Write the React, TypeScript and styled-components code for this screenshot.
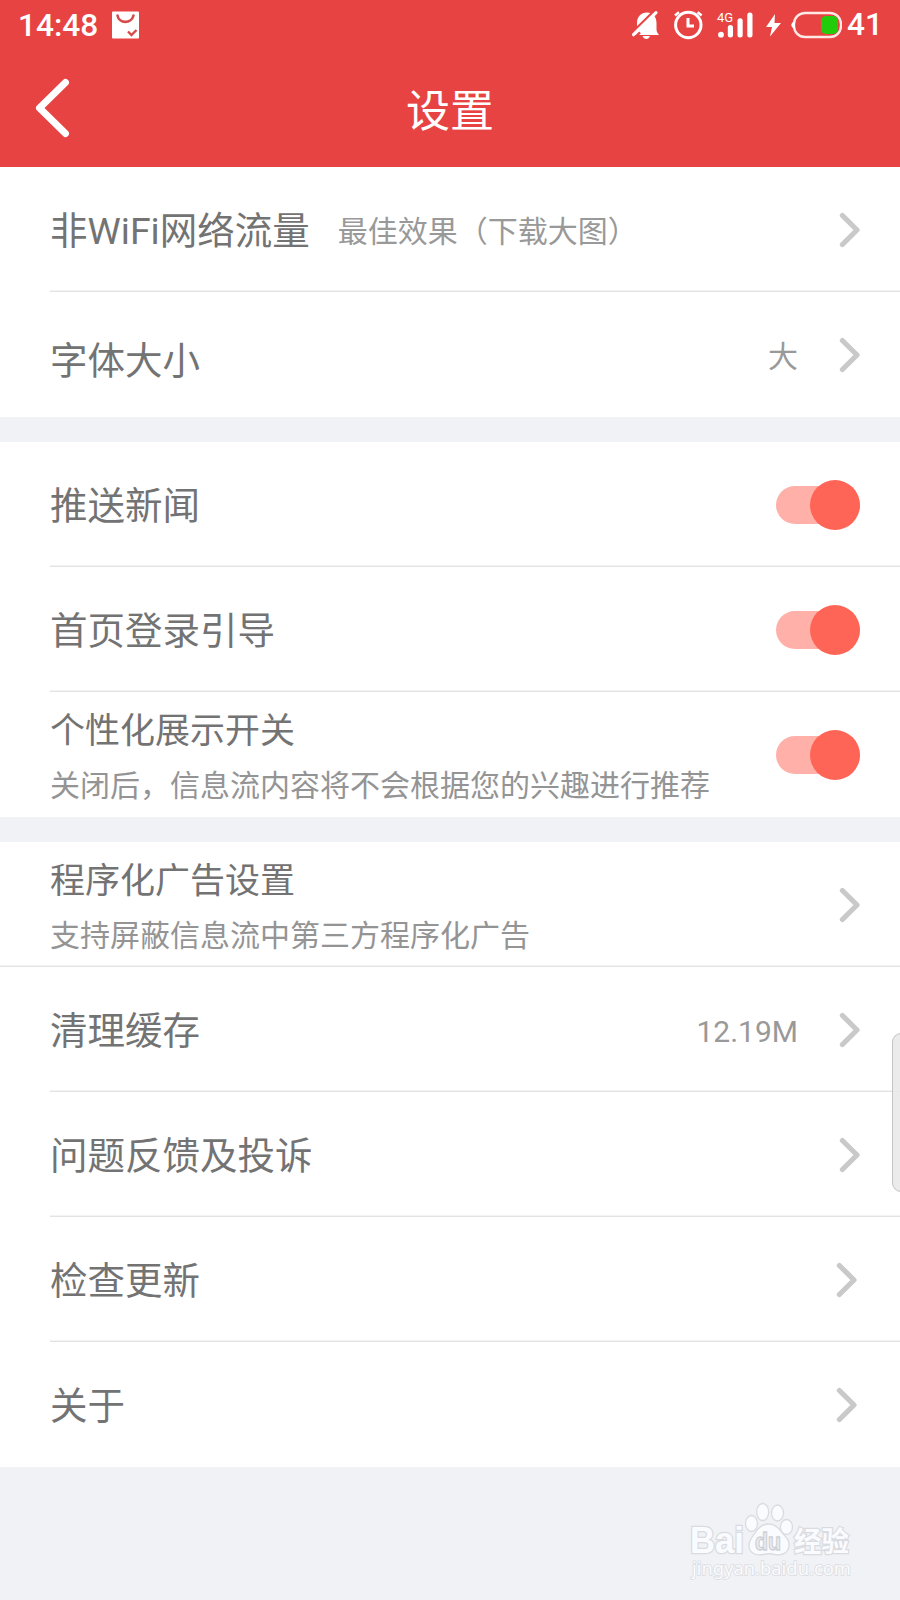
import React from 'react';
import styled, { createGlobalStyle } from 'styled-components';

const GlobalStyle = createGlobalStyle`
  * { box-sizing: border-box; }
  body {
    margin: 0;
    background: #f0f2f6;
    font-family: Roboto, "Noto Sans CJK SC", sans-serif;
  }
`;

const Screen = styled.main`
  position: relative;
  display: flex;
  flex-direction: column;
  width: 900px;
  height: 1600px;
  overflow: hidden;
  background: #f0f2f6;
`;

const Header = styled.header`
  display: flex;
  flex-direction: column;
  height: 167px;
  background: #e74342;
  color: #fff;
`;

const StatusBar = styled.div`
  display: flex;
  justify-content: space-between;
  height: 50px;
  padding: 0 20px 0 18px;
  font-size: 31.6px;
  font-weight: 500;
  line-height: 50px;
`;

const StatusGroup = styled.div`
  display: flex;
  align-items: center;
`;

const Clock = styled.span`
  width: 93px;
  padding-top: 2px;
`;

const NavBar = styled.div`
  display: grid;
  grid-template-columns: 120px 1fr 120px;
  align-items: center;
  height: 117px;
`;

const BackButton = styled.button`
  display: flex;
  padding: 0 0 1px 30px;
  border: 0;
  background: none;
  color: inherit;
`;

const PageTitle = styled.h1`
  margin: 0;
  padding-top: 7px;
  text-align: center;
  font-size: 44px;
  font-weight: 400;
  line-height: 60px;
`;

const Section = styled.section`
  margin-bottom: 25px;
  background: #fff;
`;

const Row = styled.div<{ $divider?: 'inset' | 'full' }>`
  display: flex;
  align-items: center;
  height: 125px;
  padding: 0 40px 0 50px;
  background: linear-gradient(#f3f3f4 50%, #e3e3e4 50%) no-repeat
    ${p => (p.$divider === 'full' ? '0' : '50px')} 100% / ${p => (p.$divider ? '100%' : '0')} 2px;
`;

const Labels = styled.div<{ $shift?: number }>`
  display: flex;
  flex: 1;
  flex-direction: column;
  gap: 6px;
  padding-top: ${p => p.$shift ?? 2}px;
`;

const Label = styled.span<{ $small?: boolean }>`
  color: #737373;
  font-size: ${p => (p.$small ? 35 : 37.5)}px;
  line-height: 48px;
  white-space: nowrap;
`;

const Hint = styled.span`
  margin-left: 28px;
  color: #999;
  font-size: 30px;
  position: relative;
  top: -2px;
`;

const Description = styled.span`
  color: #949494;
  font-size: 30px;
  line-height: 48px;
  white-space: nowrap;
`;

const Value = styled.span`
  margin-right: 41px;
  padding-top: 4px;
  color: #999;
  font-size: 30px;
  line-height: 48px;
`;

const Arrow = styled.svg<{ $inset?: boolean }>`
  width: 22px;
  height: 36px;
  margin-right: ${p => (p.$inset ? 2 : -1)}px;
  fill: none;
  stroke: #c9c9c9;
  stroke-width: 5.2;
  stroke-linecap: round;
  stroke-linejoin: round;
`;

const Switch = styled.button`
  display: flex;
  align-items: center;
  justify-content: flex-end;
  width: 84px;
  height: 38px;
  padding: 0;
  border: 0;
  border-radius: 19px;
  background: #ffb0a9;
`;

const Knob = styled.span`
  width: 50px;
  height: 50px;
  flex: none;
  border-radius: 50%;
  background: #ff6557;
`;

const EdgeHandle = styled.div`
  position: absolute;
  top: 1033px;
  right: -10px;
  width: 18px;
  height: 159px;
  border: 1px solid #c4c4c4;
  border-radius: 9px;
  background: rgba(232, 232, 232, 0.85);
`;

const Watermark = styled.svg`
  position: absolute;
  left: 680px;
  top: 1495px;
`;

const Chevron = ({ inset }: { inset?: boolean }) => (
  <Arrow $inset={inset} viewBox="0 0 22 36">
    <path d="M3.4 3.5 18 18 3.4 32.5" />
  </Arrow>
);

const Toggle = () => (
  <Switch role="switch" aria-checked="true">
    <Knob />
  </Switch>
);

const BagIcon = () => (
  <svg width="28" height="28" viewBox="0 0 28 28">
    <rect x="1" y="0.5" width="27" height="27" rx="1" fill="#fff" />
    <path d="M6.5 4.500c1.500 8.500 14 8.500 16 0" fill="none" stroke="#d84a4a" strokeWidth="2.6" strokeLinecap="round" />
    <path d="m17 20.500 3.500 3.500 5-5" fill="none" stroke="#d84a4a" strokeWidth="2.4" />
  </svg>
);

const StatusIcons = () => (
  <svg width="212" height="50" viewBox="630 0 212 50" fill="#fff">
    <path d="M634 35c2.500-1.500 3-3.500 3-6.500V23c0-6 4-10.500 10-10.500S656.500 17 656.500 23v5.500c0 3 .5 4 2.500 6.500z" />
    <path d="M642.500 36h7.500c-.8 2-2 3-3.700 3s-3-1-3.800-3z" />
    <path d="m630 34.700 25-24.500M635 37.300l5-5" stroke="#e74342" strokeWidth="2.400" />
    <path d="m633.500 34.700 22.500-22" stroke="#fff" strokeWidth="3.200" strokeLinecap="round" />
    <g fill="none" stroke="#fff">
      <circle cx="688.3" cy="25" r="12.7" strokeWidth="3" />
      <path d="M688 18v8h6" strokeWidth="3" />
      <path d="m675 15.500 4-3.300M701.600 15.500l-4-3.300" strokeWidth="2.6" />
    </g>
    <text x="717" y="22" fontFamily="Roboto, sans-serif" fontSize="13" fontWeight="400">4G</text>
    <circle cx="721" cy="34.7" r="2.9" />
    <rect x="727.8" y="25" width="5.2" height="12.5" rx="2.5" />
    <rect x="737.5" y="18.3" width="5.2" height="19.2" rx="2.5" />
    <rect x="747.3" y="12.5" width="5.2" height="25" rx="2.5" />
    <path d="m775 14-9 13h6l-2 9.500L781 23h-6.500z" />
    <rect x="794" y="13" width="47" height="24" rx="11" fill="none" stroke="#ffe9e7" strokeWidth="2.4" />
    <path d="M795 21c-5 2-5 6 0 8z" />
    <rect x="821" y="16" width="17" height="18" rx="5" fill="#22cc0b" />
  </svg>
);

const BatteryLevel = styled.span`
  width: 33px;
  margin-left: 5px;
`;

const BaiduMark = () => (
  <Watermark width="190" height="95" viewBox="680 1495 190 95" fill="#fafbfe" stroke="#d9dbdf" strokeWidth="1.3">
    <g paintOrder="stroke" strokeWidth="2.5" fontFamily="'Liberation Sans', sans-serif" fontWeight="700">
      <text x="690" y="1553" fontSize="36" textLength="54" lengthAdjust="spacingAndGlyphs">Bai</text>
      <text x="794" y="1551.5" fontSize="28" fontFamily="'Noto Sans CJK SC', sans-serif" textLength="55" lengthAdjust="spacingAndGlyphs">经验</text>
    </g>
    <ellipse cx="751.5" cy="1523.5" rx="6" ry="8" />
    <ellipse cx="762.7" cy="1512" rx="6" ry="8.5" />
    <ellipse cx="777.5" cy="1513" rx="6" ry="8" />
    <ellipse cx="786.5" cy="1527" rx="6" ry="7.5" />
    <path d="M757 1530c6-8 17-8 23 0 4 6 10 9 9 16-1 7-7 10-14 8.500-4-1-8-1-12 0-8 1.500-14-2-14-9 0-7 5-10 8-15.500z" />
    <text x="755" y="1550" fontSize="23" fill="#eceef2" stroke="#cfd1d6" fontFamily="'Liberation Sans', sans-serif" fontWeight="700" textLength="26" lengthAdjust="spacingAndGlyphs">du</text>
    <text x="692" y="1575" fontSize="18.5" fontFamily="'Noto Sans', sans-serif" stroke="#dadce0" strokeWidth="1.6" paintOrder="stroke" textLength="159" lengthAdjust="spacingAndGlyphs">jingyan.baidu.com</text>
  </Watermark>
);

export default function App() {
  return (
    <>
      <GlobalStyle />
      <Screen>
        <Header>
          <StatusBar>
            <StatusGroup>
              <Clock>14:48</Clock>
              <BagIcon />
            </StatusGroup>
            <StatusGroup>
              <StatusIcons />
              <BatteryLevel>41</BatteryLevel>
            </StatusGroup>
          </StatusBar>
          <NavBar>
            <BackButton aria-label="返回">
              <svg width="46" height="64" viewBox="0 0 46 64" fill="none" stroke="#fff" strokeWidth="7" strokeLinecap="round" strokeLinejoin="round">
                <path d="M35.500 6.500 9.500 32l26 25.500" />
              </svg>
            </BackButton>
            <PageTitle>设置</PageTitle>
          </NavBar>
        </Header>

        <Section>
          <Row $divider="inset">
            <Labels $shift={6}>
              <Label>非WiFi网络流量<Hint>最佳效果（下载大图）</Hint></Label>
            </Labels>
            <Chevron />
          </Row>
          <Row>
            <Labels $shift={13}><Label>字体大小</Label></Labels>
            <Value>大</Value>
            <Chevron />
          </Row>
        </Section>

        <Section>
          <Row $divider="inset">
            <Labels><Label>推送新闻</Label></Labels>
            <Toggle />
          </Row>
          <Row $divider="inset">
            <Labels><Label>首页登录引导</Label></Labels>
            <Toggle />
          </Row>
          <Row>
            <Labels $shift={8}>
              <Label $small>个性化展示开关</Label>
              <Description>关闭后，信息流内容将不会根据您的兴趣进行推荐</Description>
            </Labels>
            <Toggle />
          </Row>
        </Section>

        <Section>
          <Row $divider="full">
            <Labels $shift={8}>
              <Label $small>程序化广告设置</Label>
              <Description>支持屏蔽信息流中第三方程序化广告</Description>
            </Labels>
            <Chevron />
          </Row>
          <Row $divider="inset">
            <Labels><Label>清理缓存</Label></Labels>
            <Value>12.19M</Value>
            <Chevron />
          </Row>
          <Row $divider="inset">
            <Labels><Label>问题反馈及投诉</Label></Labels>
            <Chevron />
          </Row>
          <Row $divider="inset">
            <Labels><Label>检查更新</Label></Labels>
            <Chevron inset />
          </Row>
          <Row>
            <Labels><Label>关于</Label></Labels>
            <Chevron inset />
          </Row>
        </Section>
        <EdgeHandle />
        <BaiduMark />
      </Screen>
    </>
  );
}
